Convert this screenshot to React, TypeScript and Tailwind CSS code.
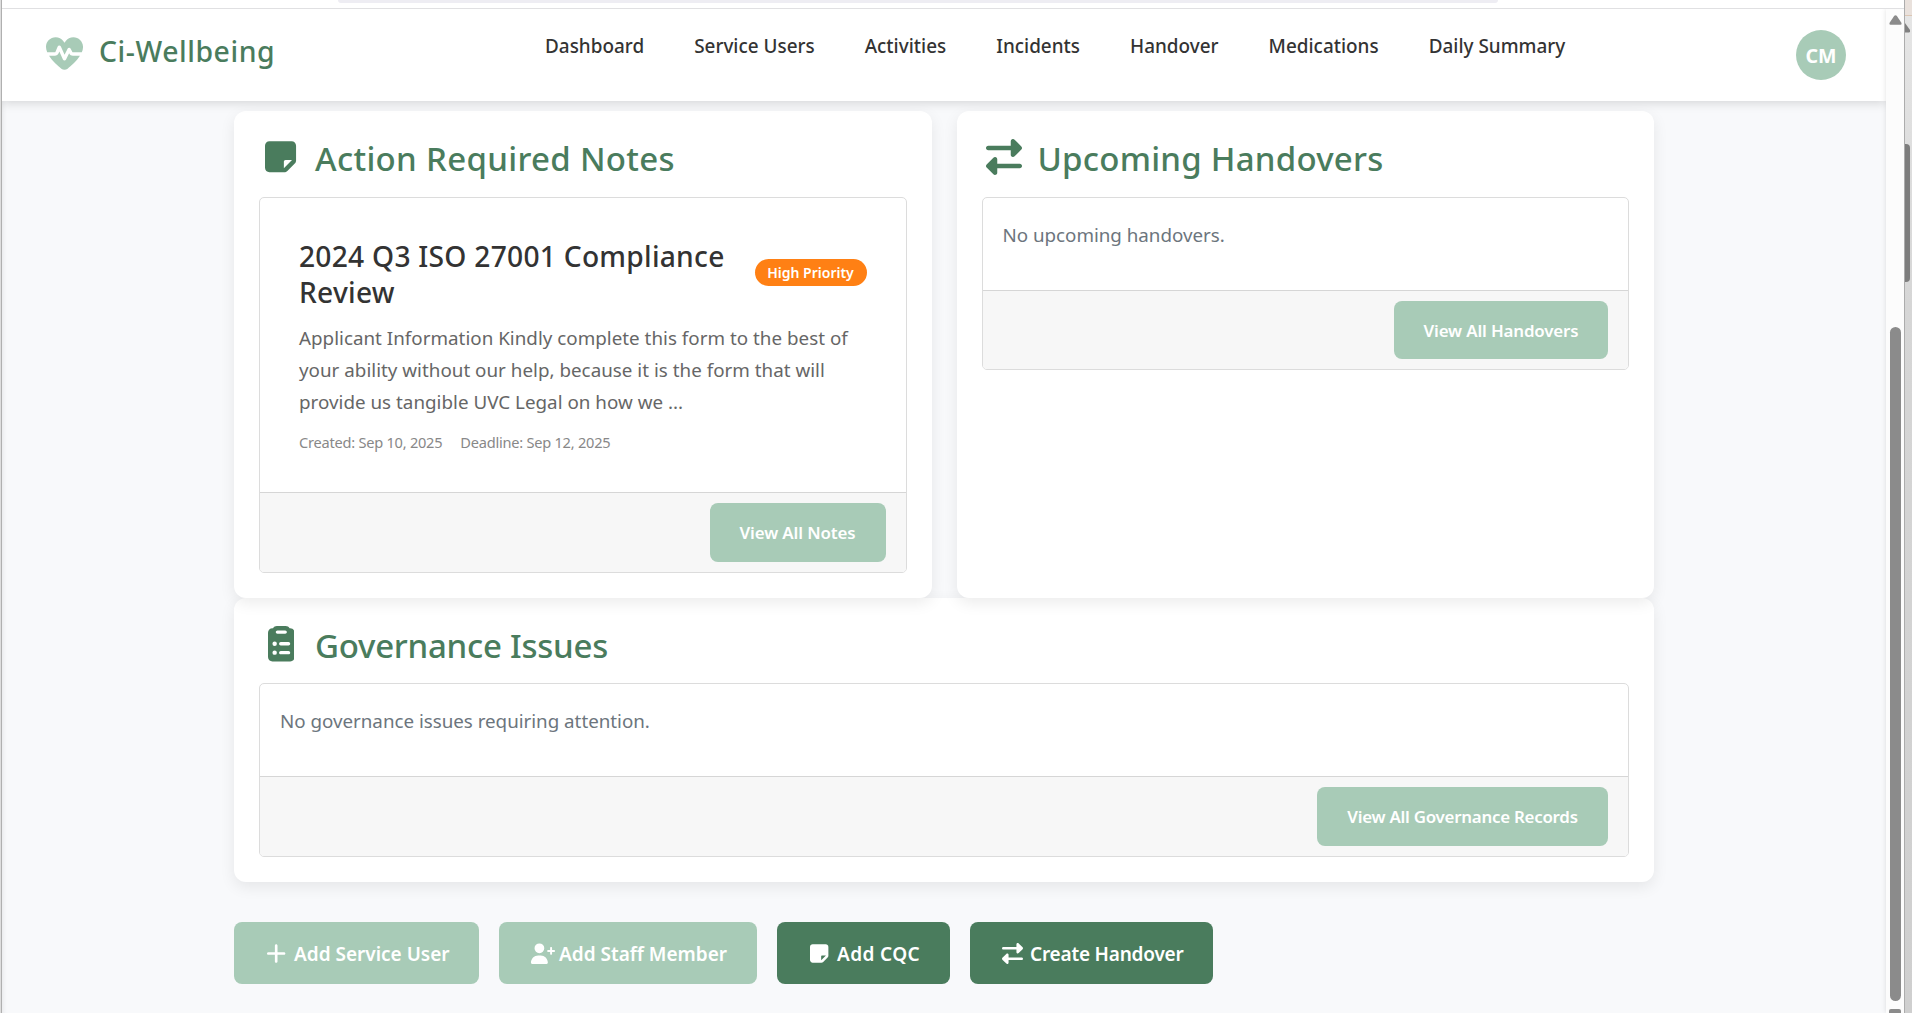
import type { ReactNode } from "react";

const ICONS = {
  note: {
    box: "0 0 448 512",
    d: "M64 480c-35.3 0-64-28.7-64-64L0 96C0 60.7 28.7 32 64 32l320 0c35.3 0 64 28.7 64 64l0 213.5c0 17-6.7 33.3-18.7 45.3L322.7 461.3c-12 12-28.3 18.7-45.3 18.7L64 480zM389.5 304L296 304c-13.3 0-24 10.7-24 24l0 93.5 117.5-117.5z",
  },
  swap: {
    box: "0 0 512 512",
    d: "M502.6 150.6l-96 96c-9.2 9.2-22.9 11.9-34.9 6.9S352 236.9 352 224l0-64-320 0c-17.7 0-32-14.3-32-32S14.3 96 32 96l320 0 0-64c0-12.9 7.8-24.6 19.8-29.6s25.7-2.2 34.9 6.9l96 96c12.5 12.5 12.5 32.8 0 45.3zm-397.3 352l-96-96c-12.5-12.5-12.5-32.8 0-45.3l96-96c9.2-9.2 22.9-11.9 34.9-6.9S160 275.1 160 288l0 64 320 0c17.7 0 32 14.3 32 32s-14.3 32-32 32l-320 0 0 64c0 12.9-7.8 24.6-19.8 29.6s-25.7 2.2-34.9-6.9z",
  },
  clipboard: {
    box: "0 0 384 512",
    d: "M311.4 32l8.6 0c35.3 0 64 28.7 64 64l0 352c0 35.3-28.7 64-64 64L64 512c-35.3 0-64-28.7-64-64L0 96C0 60.7 28.7 32 64 32l8.6 0C83.6 12.9 104.3 0 128 0L256 0c23.7 0 44.4 12.9 55.4 32zM248 112c13.3 0 24-10.7 24-24s-10.7-24-24-24L136 64c-13.3 0-24 10.7-24 24s10.7 24 24 24l112 0zM128 256a32 32 0 1 0 -64 0 32 32 0 1 0 64 0zm32 0c0 13.3 10.7 24 24 24l112 0c13.3 0 24-10.7 24-24s-10.7-24-24-24l-112 0c-13.3 0-24 10.7-24 24zm0 128c0 13.3 10.7 24 24 24l112 0c13.3 0 24-10.7 24-24s-10.7-24-24-24l-112 0c-13.3 0-24 10.7-24 24zM96 416a32 32 0 1 0 0-64 32 32 0 1 0 0 64z",
  },
  heart: {
    box: "0 0 512 512",
    d: "M256 107.9L241 87.1C216 52.5 175.9 32 133.1 32 59.6 32 0 91.6 0 165.1l0 2.6c0 23.6 6.2 48 16.6 72.3l106 0c3.2 0 6.1-1.9 7.4-4.9l31.8-76.3c3.7-8.8 12.3-14.6 21.8-14.8s18.3 5.4 22.2 14.1l51.3 113.9 41.4-82.8c4.1-8.1 12.4-13.3 21.5-13.3s17.4 5.1 21.5 13.3l23.2 46.3c1.4 2.7 4.1 4.4 7.2 4.4l123.6 0c10.5-24.3 16.6-48.7 16.6-72.3l0-2.6C512 91.6 452.4 32 378.9 32 336.2 32 296 52.5 271 87.1l-15 20.7zM469.6 288l-97.8 0c-21.2 0-40.6-12-50.1-31l-1.7-3.4-42.5 85.1c-4.1 8.3-12.7 13.5-22 13.3s-17.6-5.7-21.4-14.1l-49.3-109.5-10.5 25.2c-8.7 20.9-29.1 34.5-51.7 34.5l-80.2 0c47.2 73.8 123 141.7 170.4 177.9 12.4 9.4 27.6 14.1 43.1 14.1s30.8-4.6 43.1-14.1C346.6 429.7 422.4 361.8 469.6 288z",
  },
  plus: {
    box: "0 0 448 512",
    d: "M256 64c0-17.7-14.3-32-32-32s-32 14.3-32 32l0 160-160 0c-17.7 0-32 14.3-32 32s14.3 32 32 32l160 0 0 160c0 17.7 14.3 32 32 32s32-14.3 32-32l0-160 160 0c17.7 0 32-14.3 32-32s-14.3-32-32-32l-160 0 0-160z",
  },
  userPlus: {
    box: "0 0 640 512",
    d: "M136 128a120 120 0 1 1 240 0 120 120 0 1 1 -240 0zM48 482.3C48 383.8 127.8 304 226.3 304l59.4 0c98.5 0 178.3 79.8 178.3 178.3 0 16.4-13.3 29.7-29.7 29.7L77.7 512C61.3 512 48 498.7 48 482.3zM544 96c13.3 0 24 10.7 24 24l0 48 48 0c13.3 0 24 10.7 24 24s-10.7 24-24 24l-48 0 0 48c0 13.3-10.7 24-24 24s-24-10.7-24-24l0-48-48 0c-13.3 0-24-10.7-24-24s10.7-24 24-24l48 0 0-48c0-13.3 10.7-24 24-24z",
  },
};

function Icon({ name, className }: { name: keyof typeof ICONS; className: string }) {
  return (
    <svg viewBox={ICONS[name].box} fill="currentColor" className={className} aria-hidden="true">
      <path d={ICONS[name].d} />
    </svg>
  );
}

const NAV = ["Dashboard", "Service Users", "Activities", "Incidents", "Handover", "Medications", "Daily Summary"];

function Header() {
  return (
    <header className="relative z-20 flex h-[92px] shrink-0 items-center bg-white shadow-[0_2px_10px_rgba(0,0,0,0.15)]">
      <div className="flex w-[543px] items-center pl-[44px] text-[#4a7c5d]">
        <Icon name="heart" className="mt-[-2px] h-[37px] w-[37px] text-[#a8cbb7]" />
        <span className="mt-[-7px] ml-[16px] text-[28.4px] font-medium tracking-[0.55px]">Ci-Wellbeing</span>
      </div>
      <nav className="mt-[-17px] flex gap-[50px] text-[18.9px] font-medium tracking-[0.01px] text-[#333]">
        {NAV.map((item) => (
          <a key={item} className="whitespace-nowrap">{item}</a>
        ))}
      </nav>
      <div className="mr-[40px] ml-auto grid h-[50px] w-[50px] place-items-center rounded-full bg-[#a8cbb7] pt-[1px] text-[19.6px] font-bold text-white">
        CM
      </div>
    </header>
  );
}

function Panel({ icon, iconClass, title, titleClass, className, children }: {
  icon: keyof typeof ICONS; iconClass: string; title: string; titleClass: string; className: string; children: ReactNode;
}) {
  return (
    <section className={"rounded-[12px] bg-white p-[25px] shadow-[0_5px_15px_rgba(0,0,0,0.08)] " + className}>
      <h2 className="flex h-[42px] items-center text-[33px] leading-[42px] font-medium text-[#4a7c5d]">
        <span className="mr-[12px] flex w-[44px] justify-center">
          <Icon name={icon} className={iconClass} />
        </span>
        <span className={"pt-[3px] " + titleClass}>{title}</span>
      </h2>
      {children}
    </section>
  );
}

function Box({ action, footerClass, actionClass, className, children }: {
  action: string; footerClass: string; actionClass: string; className: string; children: ReactNode;
}) {
  return (
    <div className={"overflow-hidden rounded-[5px] border border-[#dcdcdc] " + className}>
      {children}
      <div className={"flex justify-end border-t border-[#d6d6d6] bg-[#f7f7f7] px-[20px] py-[10px] " + footerClass}>
        <button className={"h-full rounded-[8px] bg-[#a8cbb7] text-[16.9px] font-semibold whitespace-nowrap text-white " + actionClass}>
          {action}
        </button>
      </div>
    </div>
  );
}

function Empty({ children }: { children: ReactNode }) {
  return <p className="h-[92px] px-[20px] pt-[21px] text-[18.8px] leading-[32px] tracking-[-0.02px] text-[#6c757d]">{children}</p>;
}

const ACTIONS: { icon: keyof typeof ICONS; label: string; className: string }[] = [
  { icon: "plus", label: "Add Service User", className: "w-[245px] bg-[#a8cbb7]" },
  { icon: "userPlus", label: "Add Staff Member", className: "w-[258px] bg-[#a8cbb7]" },
  { icon: "note", label: "Add CQC", className: "w-[173px] bg-[#4a7c5d] tracking-[0.4px]" },
  { icon: "swap", label: "Create Handover", className: "w-[243px] bg-[#4a7c5d] tracking-[-0.2px]" },
];

function Dashboard() {
  return (
    <main className="mx-auto w-[1420px] pt-[10px]">
      <div className="relative z-10 grid h-[487px] grid-cols-2 gap-[25px]">
        <Panel icon="note" iconClass="h-[35.500px]" title="Action Required Notes" titleClass="tracking-[0.31px]" className="">
          <Box action="View All Notes" footerClass="h-[80px]" actionClass="w-[176px] tracking-[-0.12px]" className="mt-[19px]">
            <div className="h-[294px] px-[39px] pt-[40px]">
              <div className="flex items-center justify-between">
                <h3 className="w-[440px] text-[28.2px] leading-[36px] font-medium tracking-[0.25px] text-[#333]">
                  2024 Q3 ISO 27001 Compliance Review
                </h3>
                <span className="mt-[-4px] h-[27px] w-[112px] rounded-full bg-[#ff8014] text-center text-[14px] leading-[27px] font-semibold whitespace-nowrap text-white">
                  High Priority
                </span>
              </div>
              <p className="mt-[12px] w-[568px] text-[18.8px] leading-[32px] tracking-[0.02px] text-[#666]">
                Applicant Information Kindly complete this form to the best of<br />
                your ability without our help, because it is the form that will<br />
                provide us tangible UVC Legal on how we ...
              </p>
              <div className="mt-[11px] flex gap-[18px] text-[14.6px] leading-[26px] tracking-[-0.24px] text-[#888]">
                <span>Created: Sep 10, 2025</span>
                <span>Deadline: Sep 12, 2025</span>
              </div>
            </div>
          </Box>
        </Panel>
        <Panel icon="swap" iconClass="h-[36px]" title="Upcoming Handovers" titleClass="tracking-[0.24px]" className="">
          <Box action="View All Handovers" footerClass="h-[79px]" actionClass="w-[214px] pt-[1px] tracking-[-0.15px]" className="mt-[19px]">
            <Empty>No upcoming handovers.</Empty>
          </Box>
        </Panel>
      </div>
      <Panel icon="clipboard" iconClass="h-[35.500px]" title="Governance Issues" titleClass="tracking-[-0.25px]" className="h-[284px]">
        <Box action="View All Governance Records" footerClass="h-[80px]" actionClass="w-[291px] tracking-[-0.25px]" className="mt-[18px]">
          <Empty>No governance issues requiring attention.</Empty>
        </Box>
      </Panel>
      <div className="mt-[40px] flex gap-[20px]">
        {ACTIONS.map((a) => (
          <button key={a.label} className={"flex h-[62px] items-center rounded-[8px] pl-[29.500px] text-[19px] font-semibold whitespace-nowrap text-white " + a.className}>
            <span className="mr-[4.500px] flex w-[26px] justify-center">
              <Icon name={a.icon} className="h-[21px]" />
            </span>
            <span className="pt-[2px]">{a.label}</span>
          </button>
        ))}
      </div>
    </main>
  );
}

function Scrollbar() {
  return (
    <div className="relative z-30 flex w-[18px] flex-col items-center bg-[#fcfcfc] pt-[6px] shadow-[0_0_5px_rgba(0,0,0,0.12)]">
      <svg viewBox="0 0 13 10" className="h-[10px] w-[13px] fill-[#8b8b8b]">
        <path d="M5.3.8Q6.500-.4 7.700.8L12.400 7.800Q13 9.800 11.500 9.800H1.500Q0 9.800.6 7.800Z" />
      </svg>
      <div className="mt-[302px] h-[674px] w-[11px] rounded-full bg-[#8b8b8b]" />
      <div className="mt-[8px] h-[4px] w-[12px] rounded-t-[2px] bg-[#8b8b8b]" />
    </div>
  );
}

export default function App() {
  return (
    <div className="flex h-[1013px] w-[1912px] overflow-hidden bg-white font-['Noto_Sans',sans-serif]">
      <div className="w-[2px] shrink-0 border-r border-[#b0b0b0] bg-[#dedede]" />
      <div className="flex w-[1902px] shrink-0 flex-col">
        <div className="h-[9px] shrink-0 border-b border-[#e0e0e2]">
          <div className="ml-[336px] h-[3px] w-[1160px] rounded-b-[6px] bg-[#eeedf3]" />
        </div>
        <div className="flex grow overflow-hidden">
          <div className="relative w-[1884px] bg-[#f8f9fb] shadow-[inset_5px_0_5px_-4px_rgba(0,0,0,0.08)]">
            <Header />
            <Dashboard />
          </div>
          <Scrollbar />
        </div>
      </div>
      <div className="flex grow flex-col overflow-hidden border-l border-[#acacac] bg-linear-to-b from-[#e6e6e6] via-[#d6d6d6] via-30% to-[#cfcfcf]">
        <div className="h-[16px] shrink-0 border-b border-[#dcc6b4] bg-[#e9e1dc]" />
        <svg viewBox="0 0 6 10" className="mt-[7px] h-[10px] w-[6px] shrink-0 fill-[#808080]">
          <path d="M0 0L5 7Q5.500 9.500 4 9.500H0Z" />
        </svg>
        <div className="mt-[111px] h-[138px] w-[5px] shrink-0 rounded-r-[4px] bg-[#7d7d7d]" />
      </div>
    </div>
  );
}
